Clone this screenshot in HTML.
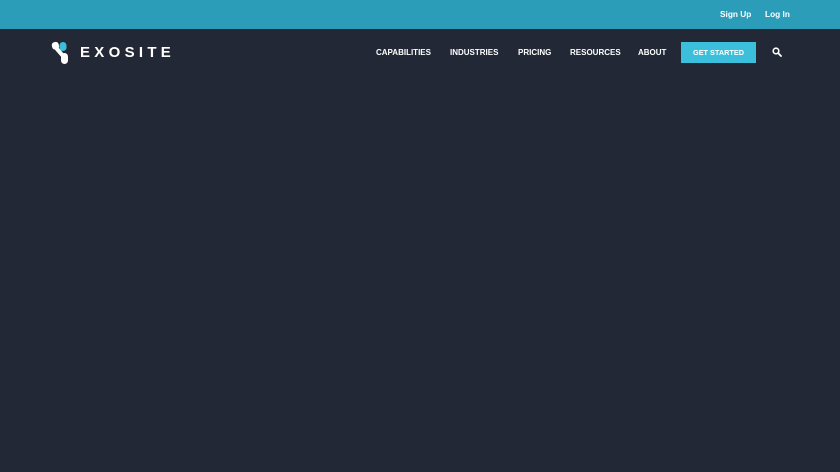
<!DOCTYPE html>
<html><head><meta charset="utf-8"><style>
*{margin:0;padding:0;box-sizing:border-box}
body{width:840px;height:472px;background:#222836;font-family:"Liberation Sans",Arial,sans-serif;overflow:hidden;position:relative}
.top{position:absolute;left:0;top:0;width:840px;height:29px;background:#2b9db9}
.top a{position:absolute;top:9px;color:#fff;font-size:8.3px;font-weight:bold;text-decoration:none}
.logo{position:absolute;left:51px;top:41px}
.brand{position:absolute;left:80px;top:44px;color:#fff;font-size:15px;letter-spacing:4.3px;font-weight:bold}
.nav a{position:absolute;top:48px;color:#fff;font-size:8px;font-weight:bold;text-decoration:none}
.btn{position:absolute;left:681px;top:42px;width:75px;height:21px;background:#3cbfdb;color:#fff;font-size:7.3px;font-weight:bold;text-align:center;line-height:21px}
</style></head><body>
<div class="top"><a style="left:720px">Sign Up</a><a style="left:765px">Log In</a></div>
<svg class="logo" width="20" height="25" viewBox="0 0 20 25">
<rect x="1" y="1" width="7" height="7.5" rx="3" fill="#fff" transform="rotate(-15 4.5 5)"/>
<rect x="8.5" y="1" width="7" height="9" rx="3.5" fill="#3cbfdb"/>
<path d="M6 8 L13 16" stroke="#fff" stroke-width="4" stroke-linecap="round"/>
<rect x="10" y="12" width="7" height="11" rx="3.5" fill="#fff"/>
</svg>
<div class="brand">EXOSITE</div>
<div class="nav">
<a style="left:376px">CAPABILITIES</a>
<a style="left:450px">INDUSTRIES</a>
<a style="left:518px">PRICING</a>
<a style="left:570px">RESOURCES</a>
<a style="left:638px">ABOUT</a>
</div>
<div class="btn">GET STARTED</div>
<svg style="position:absolute;left:772px;top:47px" width="10" height="10" viewBox="0 0 10 10"><circle cx="4" cy="4" r="2.8" stroke="#fff" stroke-width="1.6" fill="none"/><path d="M6 6 L9 9" stroke="#fff" stroke-width="1.8" stroke-linecap="round"/></svg>
</body></html>
